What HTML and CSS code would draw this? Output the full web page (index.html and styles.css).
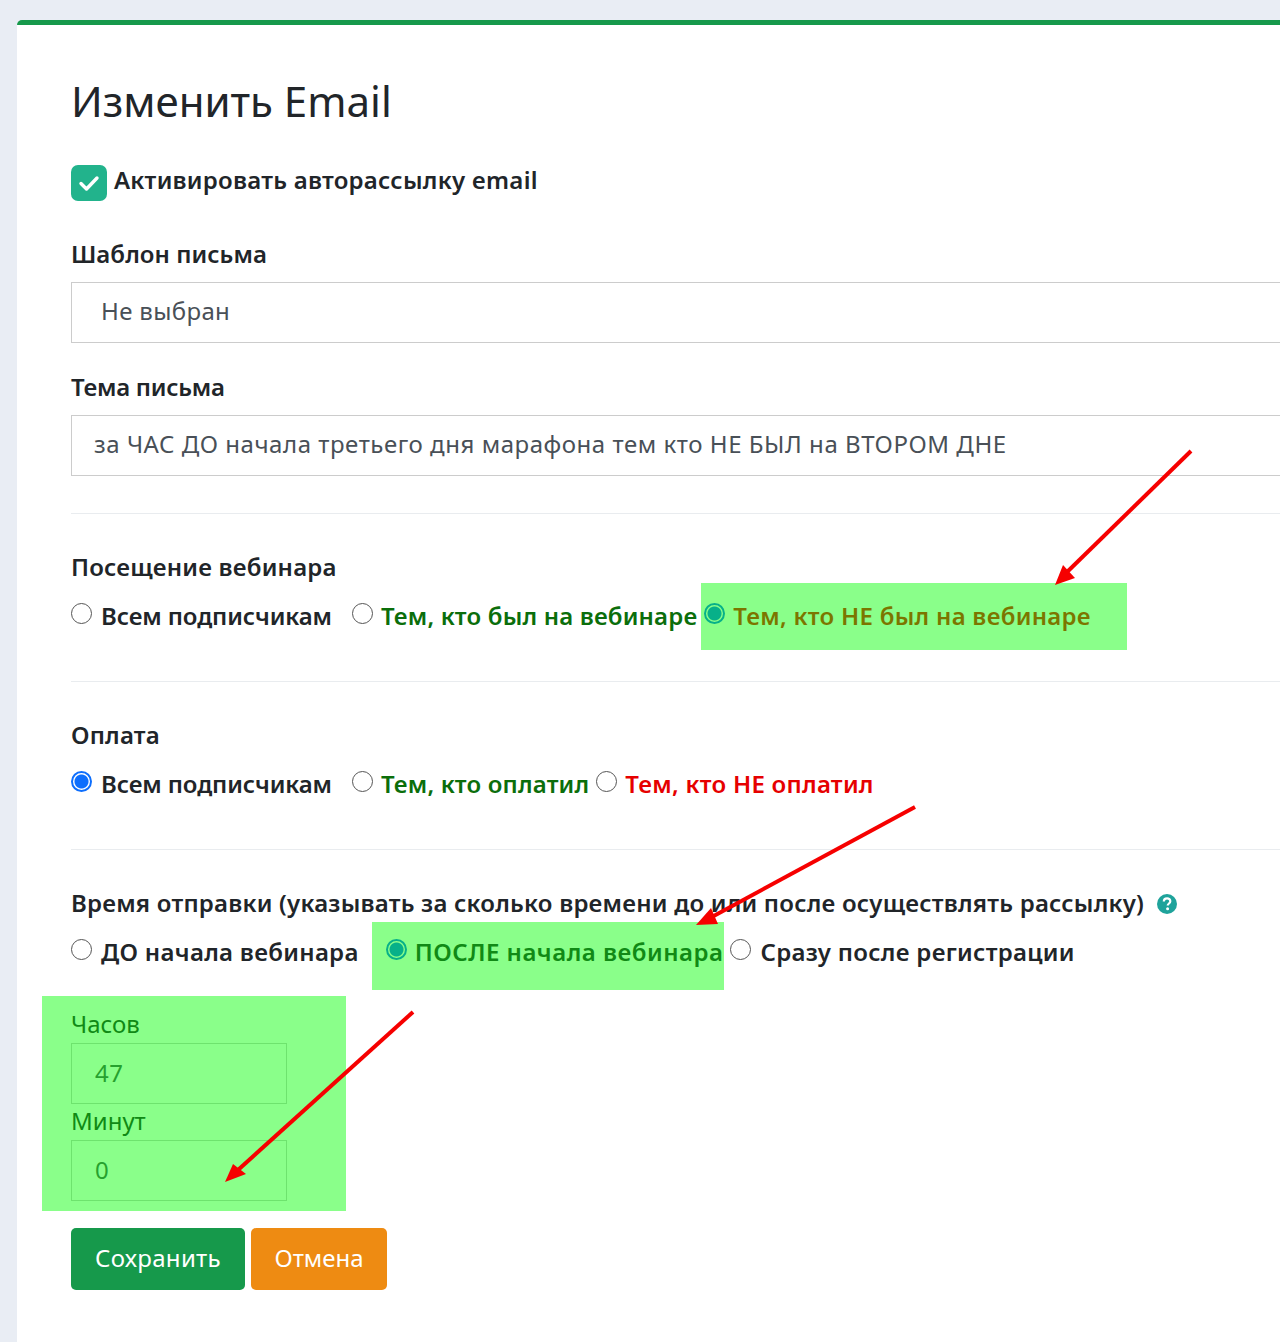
FILE: index.html
```html
<!DOCTYPE html>
<html lang="ru">
<head>
    <meta charset="UTF-8">
    <title>Изменить Email</title>
    <link rel="stylesheet" href="styles.css">
</head>
<body>
    <div class="card">
        <h1>Изменить Email</h1>
        <form>
            <label class="check-row">
                <span class="check-box">
                    <svg width="22" height="18" viewBox="0 0 22 18"><path d="M3 9.5l5.5 5.5L19 4" fill="none" stroke="#fff" stroke-width="3.4" stroke-linecap="round" stroke-linejoin="round"/></svg>
                </span>
                Активировать авторассылку email
            </label>

            <label class="field-label first" for="template">Шаблон письма</label>
            <div class="field field-select" id="template">Не выбран</div>

            <label class="field-label second" for="subject">Тема письма</label>
            <input class="field field-subject" id="subject" type="text" value="за ЧАС ДО начала третьего дня марафона тем кто НЕ БЫЛ на ВТОРОМ ДНЕ">

            <hr>

            <div class="field-label">Посещение вебинара</div>
            <div class="radio-row">
                <label class="radio wide"><input type="radio" name="visit"><span>Всем подписчикам</span></label>
                <label class="radio narrow good"><input type="radio" name="visit"><span>Тем, кто был на вебинаре</span></label>
                <label class="radio bad"><input type="radio" name="visit" checked><span>Тем, кто НЕ был на вебинаре</span></label>
            </div>

            <hr class="after-row">

            <div class="field-label">Оплата</div>
            <div class="radio-row">
                <label class="radio wide"><input type="radio" name="paid" checked><span>Всем подписчикам</span></label>
                <label class="radio narrow good"><input type="radio" name="paid"><span>Тем, кто оплатил</span></label>
                <label class="radio bad"><input type="radio" name="paid"><span>Тем, кто НЕ оплатил</span></label>
            </div>

            <hr class="after-row">

            <div class="field-label time-label">Время отправки (указывать за сколько времени до или после осуществлять рассылку)
                <svg class="help" width="20" height="20" viewBox="0 0 20 20"><circle cx="10" cy="10" r="10" fill="#1fa39b"/><path d="M6.8 7.6c0-2 1.4-3.2 3.3-3.2s3.2 1.1 3.2 2.8c0 2.300-2.600 2.300-2.600 4.300" fill="none" stroke="#fff" stroke-width="2.200"/><circle cx="10.600" cy="14.800" r="1.500" fill="#fff"/></svg>
            </div>
            <div class="radio-row">
                <label class="radio wider"><input type="radio" name="when"><span>ДО начала вебинара</span></label>
                <label class="radio after"><input type="radio" name="when" checked><span>ПОСЛЕ начала вебинара</span></label>
                <label class="radio last"><input type="radio" name="when"><span>Сразу после регистрации</span></label>
            </div>

            <div class="time-fields">
                <label for="hours">Часов</label>
                <input class="field small" id="hours" type="text" value="47">
                <label for="minutes">Минут</label>
                <input class="field small" id="minutes" type="text" value="0">
            </div>

            <div class="buttons">
                <button type="button" class="btn btn-save">Сохранить</button>
                <button type="button" class="btn btn-cancel">Отмена</button>
            </div>
        </form>
    </div>

    <!-- пометки поверх скриншота -->
    <div class="mark mark-visit"></div>
    <div class="mark mark-when"></div>
    <div class="mark mark-time"></div>
    <svg class="arrows" width="1280" height="1342" viewBox="0 0 1280 1342">
        <g stroke="#f60000" stroke-width="4" fill="#f60000">
            <path d="M1191 451L1064 575"/>
            <path d="M1055 585L1063 565L1075 578Z" stroke="none"/>
            <path d="M915 807L710 918"/>
            <path d="M696 925L711 908L718 924Z" stroke="none"/>
            <path d="M413 1012L238 1170"/>
            <path d="M225 1182L233 1164L246 1174Z" stroke="none"/>
        </g>
    </svg>
</body>
</html>
```

FILE: styles.css
```css
html, body { margin: 0; height: 1342px; overflow: hidden; }
body { background: #e9edf4; font-family: "Noto Sans", sans-serif; color: #212529; position: relative; }

.card { height: 1322px; margin: 20px 0 0 17px; padding: 51px 0 0 54px; background: #fff; border-top: 5px solid #16994b; border-radius: 5px 0 0 0; box-sizing: border-box; }

h1 { margin: 0 0 39px; font-size: 42px; line-height: 50px; font-weight: 400; }

.check-row { display: flex; gap: 7px; height: 36px; font-size: 24px; line-height: 30px; font-weight: 600; letter-spacing: 0.25px; }
.check-box { width: 36px; height: 36px; border-radius: 7px; background: #22b38c; display: flex; align-items: center; justify-content: center; }

.field-label { display: block; margin: 40px 0 15px; font-size: 24px; line-height: 26px; font-weight: 600; letter-spacing: 0.2px; white-space: nowrap; }
.field-label.first { letter-spacing: 0.05px; }
.field-label.second { margin-top: 31px; letter-spacing: -0.25px; }
.field-label.time-label { letter-spacing: 0.22px; }
.help { vertical-align: -2px; margin-left: 6px; }

.field { display: block; width: 100%; height: 61px; padding: 0 22px; box-sizing: border-box; border: 1px solid #ccc; border-right: 0; background: #fff; font: 400 24px/55px "Noto Sans", sans-serif; color: #495057; outline: none; }
.field-select { padding-left: 29px; letter-spacing: 0.35px; }
.field-subject { padding-bottom: 5px; letter-spacing: 0.54px; }
.field.small { width: 216px; border-right: 1px solid #ccc; padding: 0 23px 3px; letter-spacing: 0.5px; }

hr { height: 1px; margin: 37px 0 0; border: 0; background: #e9ecef; }
hr.after-row { margin-top: 51px; }

.radio-row { display: flex; margin-top: 22px; font-size: 24px; line-height: 28px; font-weight: 600; letter-spacing: 0.25px; white-space: nowrap; }
.radio { display: flex; gap: 8px; }
.radio input { appearance: none; width: 21px; height: 21px; flex: none; margin: 0; box-sizing: border-box; border: 1px solid #555; border-radius: 50%; background: #fff; position: relative; top: 1px; }
.radio input:checked { border: 2px solid #0d6efd; background: radial-gradient(circle, #0d6efd 0, #0d6efd 6.5px, #fff 7.5px); }
.radio.wide { gap: 9px; margin-right: 20px; letter-spacing: -0.1px; }
.radio.wider { gap: 9px; margin-right: 27px; letter-spacing: 0.3px; }
.radio.narrow { margin-right: 7px; }
.radio.after { margin-right: 7px; letter-spacing: 0.5px; }
.radio.last { gap: 9px; letter-spacing: 0.3px; }
.good { color: #0b6e0b; letter-spacing: 0.17px; }
.bad { color: #e60000; letter-spacing: 0.27px; }

.time-fields { margin-top: 44px; color: #212529; }
.time-fields label { display: block; font-size: 24px; line-height: 28px; margin-bottom: 5px; }
.time-fields .field { margin-bottom: 3px; }

.buttons { display: flex; gap: 6px; margin-top: 27px; }
.btn { height: 62px; padding: 0 0 3px; border: 1px solid transparent; border-radius: 5px; color: #fff; font: 400 24px "Noto Sans", sans-serif; }
.btn-save { background: #16994b; width: 174px; letter-spacing: 0.3px; }
.btn-cancel { background: #ee8b12; width: 136px; }

.mark { position: absolute; background: rgba(0, 255, 0, 0.46); }
.mark-visit { left: 701px; top: 583px; width: 426px; height: 67px; }
.mark-when { left: 372px; top: 922px; width: 352px; height: 68px; }
.mark-time { left: 42px; top: 996px; width: 304px; height: 215px; }
.arrows { position: absolute; left: 0; top: 0; }
```
